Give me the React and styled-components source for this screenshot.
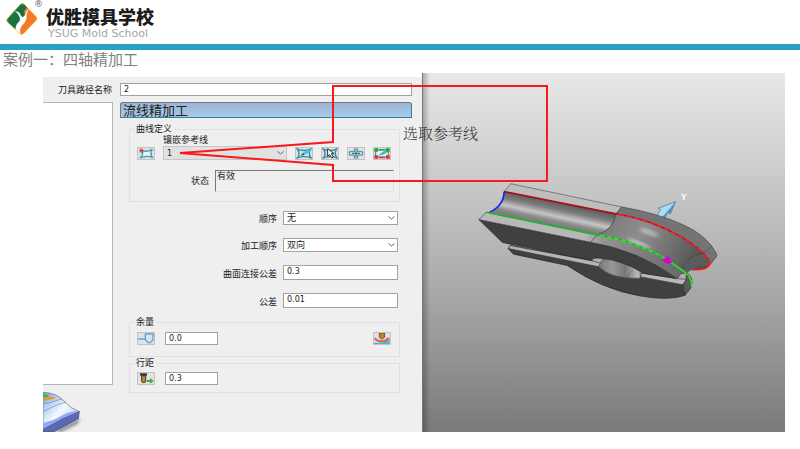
import React from "react";
import styled, { createGlobalStyle } from "styled-components";

const GlobalStyle = createGlobalStyle`
  * {
    box-sizing: border-box;
  }

  body {
    margin: 0;
    background: #fff;
    font-family: "DejaVu Sans", "Noto Sans CJK SC", sans-serif;
  }
`;

const Header = styled.header`
  display: flex;
  height: 50px;
  padding-left: 4px;
  border-bottom: 6px solid #2aa1c0;
`;

const Registered = styled.span`
  width: 8px;
  margin-left: -7px;
  font-size: 9px;
  line-height: 9px;
  color: #666;
`;

const Brand = styled.div`
  padding: 7px 0 0 4px;
`;

const BrandName = styled.div`
  font-family: "Noto Sans CJK SC", sans-serif;
  font-weight: 900;
  font-size: 18px;
  line-height: 18px;
  color: #1c1c1c;
`;

const BrandSub = styled.div`
  padding-left: 2px;
  font-size: 11px;
  line-height: 17px;
  color: #a6a6a6;
`;

const PageTitle = styled.h1`
  margin: 0;
  padding-left: 3px;
  font-family: "Noto Sans CJK SC", sans-serif;
  font-weight: 400;
  font-size: 15px;
  line-height: 18px;
  color: #808080;
`;

const Slide = styled.main`
  position: relative;
  display: grid;
  grid-template-columns: 379px 1fr;
  margin: 5px 15px 16px 43px;
`;

const Panel = styled.form`
  display: flex;
  flex-direction: column;
  margin-top: 4px;
  background: #efefef;
`;

const NameRow = styled.div`
  display: grid;
  grid-template-columns: 69px 1fr;
  align-items: center;
  gap: 8px;
  padding: 6px 10px 6px 0;
`;

const Label = styled.label`
  font-size: 9px;
  line-height: 12px;
  text-align: right;
  color: #222;
`;

const Field = styled.input`
  width: ${({ $narrow }) => ($narrow ? "53px" : "100%")};
  height: ${({ $small }) => ($small ? "13px" : "15px")};
  padding: 0 3px ${({ $small }) => ($small ? 0 : 3)}px;
  border: 1px solid #a2a2a2;
  border-radius: 0;
  background: #fff;
  font-family: inherit;
  font-size: 8px;
  color: #222;
`;

const Body = styled.div`
  display: flex;
  flex: 1;
`;

const Sidebar = styled.div`
  display: flex;
  flex-direction: column;
  justify-content: space-between;
  width: 70px;
`;

const List = styled.div`
  height: 283px;
  border: solid #b4b4bc;
  border-width: 1px 1px 1px 0;
  background: #fff;
`;

const Content = styled.div`
  flex: 1;
  padding: 0 10px 39px 7px;
`;

const SectionTitle = styled.h2`
  margin: 0 0 5px;
  padding-left: 2px;
  border: 1px solid #2f8496;
  border-top-color: #777;
  border-left-color: #777;
  border-radius: 3px 3px 0 0;
  background: linear-gradient(#9ab5d6, #aac8ea);
  font-family: "Noto Sans CJK SC", sans-serif;
  font-weight: 400;
  font-size: 13px;
  line-height: 14px;
  color: #222;
`;

const Group = styled.fieldset`
  min-width: 0;
  margin: 0 12px 0 9px;
  padding: ${({ $top = 0 }) => $top}px 8px ${({ $bottom = 8 }) => $bottom}px 7px;
  border: 1px solid #e0e0e0;
`;

const Legend = styled.legend`
  margin-left: -3px;
  padding: 0 2px;
  font-size: 9px;
  line-height: 12px;
  color: #222;
`;

const Row = styled.div`
  display: flex;
  align-items: flex-end;
  gap: ${({ $wide }) => ($wide ? 10 : 8)}px;
`;

const Spacer = styled.div`
  flex: 1;
`;

const Stack = styled.div`
  display: flex;
  flex: 1;
  flex-direction: column;

  label {
    line-height: 11px;
    text-align: left;
  }
`;

const IconButton = styled.button`
  display: flex;
  align-items: center;
  justify-content: center;
  width: 18px;
  height: 13px;
  padding: 0;
  border: 1px solid #c2c2c2;
  background: #e1e1e1;
`;

const SelectBox = styled.div`
  position: relative;
  display: flex;

  svg {
    position: absolute;
    right: 3px;
    top: 5px;
    pointer-events: none;
  }
`;

const Select = styled.select`
  width: 100%;
  height: 14px;
  padding: 0 3px;
  appearance: none;
  border: 1px solid ${({ $flat }) => ($flat ? "#c6c6c6" : "#a2a2a2")};
  border-radius: 0;
  background: ${({ $flat }) => ($flat ? "#e1e1e1" : "#fff")};
  font-family: inherit;
  font-size: ${({ $flat }) => ($flat ? "8px" : "9px")};
  line-height: 11px;
  color: #222;
`;

const StatusRow = styled.div`
  display: grid;
  grid-template-columns: 72px 1fr;
  align-items: center;
  gap: 6px;
  margin-top: 10px;
  margin-right: -3px;
`;

const Status = styled.textarea`
  width: 100%;
  height: 22px;
  padding: 0 1px;
  border: 1px solid #e3e3e3;
  border-top-color: #777;
  border-left-color: #777;
  background: transparent;
  font-family: inherit;
  font-size: 9px;
  line-height: 11px;
  color: #222;
  resize: none;
  overflow: hidden;
`;

const Options = styled.div`
  display: grid;
  grid-template-columns: 1fr 115px;
  align-items: end;
  gap: 13px 6px;
  padding: 9px 14px 8px 0;
`;

const Viewport = styled.section`
  border-left: 1px solid #777;
  background:
    linear-gradient(90deg, rgba(0, 0, 0, 0.25), rgba(0, 0, 0, 0) 7px),
    linear-gradient(#e8e8e8, #c8c8c8 31%, #a5a5a5 64%, #7a7a7a);

  svg {
    display: block;
    width: 100%;
    height: 100%;
  }
`;

const Callout = styled.div`
  position: absolute;
  left: 135px;
  top: 11px;
  display: flex;
  pointer-events: none;
`;

const CalloutText = styled.span`
  position: absolute;
  left: 225px;
  top: 39px;
  font-family: "Noto Serif CJK SC", "Noto Sans CJK SC", serif;
  font-weight: 300;
  font-size: 15px;
  line-height: 20px;
  white-space: nowrap;
  color: #333;
`;

const Logo = () => (
  <svg width="37" height="37" viewBox="12 1 111 111">
    <path d="M61 14Q67 9 73 14L109 51Q114 57 109 62L71 102Q65 108 59 102L23 68Q17 62 23 56Z" fill="#f47b2a" />
    <path d="M61 14Q67 9 73 14L82 24Q70 28 74 42Q72 60 58 72Q46 82 51 94L23 68Q17 62 23 56Z" fill="#187440" />
    <path d="M44 35Q58 34 62 47Q67 58 76 46Q76 34 88 28Q78 38 80 52Q78 67 68 75Q58 84 61 103L47 91Q45 76 57 66Q63 58 57 48Q52 39 44 35Z" fill="#fff" />
    <path d="M61 14Q67 9 73 14L109 51Q114 57 109 62L71 102Q65 108 59 102L23 68Q17 62 23 56Z" fill="none" stroke="#f3e45a" strokeWidth="2" />
  </svg>
);

const Chevron = () => (
  <svg width="7" height="4" viewBox="0 0 7 4">
    <path d="M.5 .5 3.5 3 6.5 .5" fill="none" stroke="#666" />
  </svg>
);

const Frame = ({ children }) => (
  <svg width="16" height="11" viewBox="0 0 48 33">
    {children}
  </svg>
);

const curve = "M4 3Q24 12 44 3Q35 17 45 30Q24 22 4 30Q14 17 4 3Z";

const CurveIcon = () => (
  <Frame>
    <path d="M12 8Q27 13 43 4Q34 17 44 29Q26 21 6 30Q19 19 12 8" fill="#e8f4f6" stroke="#3a9fb2" strokeWidth="4" />
    <path d="M3 8h14M10 1v14M5 3l10 10M15 3L5 13" stroke="#d84550" strokeWidth="3" />
  </Frame>
);

const DrawIcon = () => (
  <Frame>
    <path d={curve} fill="#c8e6ee" stroke="#318c9f" strokeWidth="4" />
    <path d="M17 21L23 13 38 4 44 10 31 18Z" fill="#51bfe5" />
    <path d="M13 23l8-8 5 6Z" fill="#315963" />
  </Frame>
);

const PickIcon = () => (
  <Frame>
    <path d={curve} fill="#b9dce4" stroke="#318c9f" strokeWidth="4" />
    <path d="M17 2V25L23 20 29 30 34 27 28 17H36Z" fill="#fff" stroke="#333" strokeWidth="3" />
  </Frame>
);

const CrossIcon = () => (
  <Frame>
    <path d="M19 3H29V11H44V21H29V30H19V21H4V11H19Z" fill="#b9edf5" stroke="#3a8797" strokeWidth="3" />
    <path d="M24 7V26M12 16H36" stroke="#555" strokeWidth="3" />
  </Frame>
);

const EditIcon = () => (
  <Frame>
    <path d="M5 6H43V27H5Z" fill="#e2f5f5" stroke="#333" strokeWidth="2" />
    <path d="M12 23L25 12 38 6 43 11 29 20Z" fill="#48b9df" />
    <path d="M1 1h11v10H1ZM36 1h11v10H36ZM15 3h18v4H15Z" fill="#1da735" />
    <path d="M1 22h11v10H1ZM36 22h11v10H36ZM15 26h18v5H15Z" fill="#df2f2b" />
  </Frame>
);

const StockIcon = () => (
  <Frame>
    <path d="M0 18H20M22 3H45V20L37 29H30L22 20Z" fill="none" stroke="#58a4df" strokeWidth="4" />
  </Frame>
);

const ThicknessIcon = () => (
  <Frame>
    <path d="M0 29H18Q40 29 47 14V33H0Z" fill="#39bfd6" />
    <path d="M2 15Q8 25 23 25 38 25 43 14" fill="none" stroke="#e4605e" strokeWidth="7" />
    <path d="M16 0H32V13L24 19 16 13Z" fill="#b58821" stroke="#44391c" strokeWidth="2" />
  </Frame>
);

const StepIcon = () => (
  <Frame>
    <path d="M6 1H27V8H6Z" fill="#333" />
    <path d="M11 8H23V26Q17 32 11 26Z" fill="#bd8b1f" stroke="#333" strokeWidth="3" />
    <path d="M26 21H36V15L47 24 36 32V27H26Z" fill="#35b33d" />
  </Frame>
);

const SurfacePreview = () => (
  <svg width="42" height="47" viewBox="15 48 126 141">
    <defs>
      <linearGradient id="surface" x1="0" y1="0" x2="1" y2="1">
        <stop offset="0" stopColor="#7fa8ed" />
        <stop offset=".5" stopColor="#f1faff" />
        <stop offset="1" stopColor="#8ab2f3" />
      </linearGradient>
      <filter id="soft">
        <feGaussianBlur stdDeviation="5" />
      </filter>
    </defs>
    <path d="M50 187L128 148 118 165 70 189Z" fill="#888" filter="url(#soft)" />
    <path d="M15 70Q56 72 78 96T124 128L15 179Z" fill="url(#surface)" stroke="#666" strokeWidth="2" />
    <path d="M15 76Q27 75 37 81L15 86Z" fill="#2cbf3c" />
    <path d="M15 89Q33 81 47 84L55 88 15 97Z" fill="#ed9335" />
    <path d="M15 105Q48 98 70 90M15 128Q58 105 82 100" fill="none" stroke="#74839a" strokeWidth="2" />
    <path d="M15 181L75 148 124 127L121 149 47 189H15Z" fill="#5b69b2" stroke="#394681" strokeWidth="2" />
    <path d="M15 162Q48 155 75 138 98 126 124 127L75 148 15 180Z" fill="#93a4f4" />
  </svg>
);

const Model = () => (
  <svg viewBox="422 73 363 360">
    <defs>
      <linearGradient id="trough" gradientUnits="userSpaceOnUse" x1="250" y1="96" x2="235" y2="166">
        <stop offset="0" stopColor="#5e5e5e" />
        <stop offset=".3" stopColor="#7e7e7e" />
        <stop offset=".58" stopColor="#c6c6c6" />
        <stop offset=".78" stopColor="#8c8c8c" />
        <stop offset="1" stopColor="#787878" />
      </linearGradient>
      <linearGradient id="bend" gradientUnits="userSpaceOnUse" x1="430" y1="150" x2="710" y2="290">
        <stop offset="0" stopColor="#7e7e7e" />
        <stop offset=".3" stopColor="#8e8e8e" />
        <stop offset=".65" stopColor="#6c6c6c" />
        <stop offset="1" stopColor="#484848" />
      </linearGradient>
      <linearGradient id="rim" gradientUnits="userSpaceOnUse" x1="340" y1="0" x2="650" y2="0">
        <stop offset="0" stopColor="#b8b8b8" />
        <stop offset=".18" stopColor="#949494" />
        <stop offset="1" stopColor="#666" />
      </linearGradient>
      <linearGradient id="hole">
        <stop offset="0" stopColor="#777" />
        <stop offset=".3" stopColor="#999" />
        <stop offset=".6" stopColor="#777" />
        <stop offset=".9" stopColor="#bbb" />
        <stop offset="1" stopColor="#555" />
      </linearGradient>
      <filter id="glow">
        <feGaussianBlur stdDeviation="6" />
      </filter>
    </defs>
    <g transform="translate(470 170) scale(.3333)" strokeLinejoin="round">
      <path d="M557 142L571 120 564 116 616 96 600 133 592 129 582 148Z" fill="#a9dcf5" stroke="#456d89" strokeWidth="2" />
      <path d="M574 145L616 96 600 133 592 129 582 149Z" fill="#5b8db8" />

      {/* lower plate */}
      <path d="M112 237L118 228 365 273 388 291 515 313 638 346 644 378Q600 395 510 380 395 360 290 288L128 254Z" fill="#404040" stroke="#222" strokeWidth="2" />
      <path d="M112 237L118 228 365 274 392 282 384 292Z" fill="#b5b5b5" stroke="#333" strokeWidth="2" />
      <path d="M384 291L396 270Q450 270 517 308L508 327Q420 329 384 291Z" fill="url(#hole)" stroke="#444" strokeWidth="2" />
      <path d="M470 322Q478 308 488 302" fill="none" stroke="#444" strokeWidth="2" strokeDasharray="4 3" />
      <path d="M515 311L620 328 650 330 638 346 510 322Z" fill="#bababa" stroke="#444" strokeWidth="2" />
      <path d="M648 308Q672 325 663 354L644 378Q648 360 638 346L648 330Z" fill="#5c5c5c" stroke="#222" strokeWidth="2" />

      {/* upper body */}
      <path d="M24 150L95 219 360 272Q372 263 388 266 425 267 455 280 490 292 520 312L618 327 626 322Q500 245 360 218Z" fill="#404040" stroke="#222" strokeWidth="2" />
      <path d="M24 150L46 128 380 196Q500 215 592 272L650 310 632 313 620 327Q500 240 360 218Z" fill="url(#rim)" stroke="#444" strokeWidth="2" />
      <path d="M100 66L436 133Q430 178 380 196L56 128Q96 108 100 66Z" fill="url(#trough)" />
      <path d="M436 133Q540 148 640 206 716 254 719 284 712 302 668 301 655 304 650 311L592 272Q500 215 380 196 430 178 436 133Z" fill="url(#bend)" />
      <path d="M638 300Q642 272 676 258 710 248 716 266L719 284Q708 292 684 291 662 296 650 311Z" fill="#5c5c5c" />
      <ellipse cx="536" cy="188" rx="30" ry="7" transform="rotate(20 536 188)" fill="#ddd" opacity=".7" filter="url(#glow)" />
      <ellipse cx="505" cy="221" rx="38" ry="6" transform="rotate(22 505 221)" fill="#eee" opacity=".7" filter="url(#glow)" />
      <path d="M100 66L120 42 454 112 436 133Z" fill="#bdbdbd" stroke="#555" strokeWidth="2" />
      <path d="M436 133L454 112Q560 130 640 166 714 200 740 255L738 263 719 286Q716 254 640 206 540 148 436 133Z" fill="#747474" stroke="#444" strokeWidth="2" />
      <path d="M436 133Q432 178 380 196L360 218" fill="none" stroke="#333" strokeWidth="2" />
      <path d="M638 300Q643 268 680 256 706 252 725 230" fill="none" stroke="#333" strokeWidth="2" strokeDasharray="4 3" />

      {/* drive curves */}
      <path d="M100 66L436 133" stroke="#a90f16" strokeWidth="5" />
      <path d="M436 133Q540 148 640 206 716 254 719 284 712 302 668 301" fill="none" stroke="#ef1b22" strokeWidth="5" />
      <path d="M436 133Q540 148 640 206 700 244 714 268" fill="none" stroke="#8d1218" strokeWidth="3" strokeDasharray="8 16" />
      <path d="M100 66Q99 108 56 128" fill="none" stroke="#2020f0" strokeWidth="5" />
      <path d="M46 128L380 196" stroke="#20b52a" strokeWidth="5" />
      <path d="M380 196Q500 215 592 272L640 305Q668 325 664 353" fill="none" stroke="#23ed25" strokeWidth="5" />
      <path d="M380 196Q500 215 592 272" fill="none" stroke="#168b18" strokeWidth="3" strokeDasharray="8 14" />
      <path d="M576 272L594 260 604 279 590 282Z" fill="#d800d4" stroke="#d800d4" strokeWidth="2" />
      <text x="632" y="90" fontFamily="Liberation Sans, sans-serif" fontSize="25" fontWeight="700" fill="#fff">Y</text>
    </g>
  </svg>
);

const OptionSelect = ({ id, label, value }) => (
  <>
    <Label htmlFor={id}>{label}</Label>
    <SelectBox>
      <Select id={id} defaultValue={value}>
        <option>{value}</option>
      </Select>
      <Chevron />
    </SelectBox>
  </>
);

const OptionField = ({ id, label, value }) => (
  <>
    <Label htmlFor={id}>{label}</Label>
    <Field id={id} defaultValue={value} />
  </>
);

const ToolButton = ({ label, icon: Icon }) => (
  <IconButton type="button" aria-label={label}>
    <Icon />
  </IconButton>
);

const App = () => (
  <>
    <GlobalStyle />
    <Header>
      <Logo />
      <Registered>®</Registered>
      <Brand>
        <BrandName>优胜模具学校</BrandName>
        <BrandSub>YSUG Mold School</BrandSub>
      </Brand>
    </Header>
    <PageTitle>案例一：四轴精加工</PageTitle>

    <Slide>
      <Panel>
        <NameRow>
          <Label htmlFor="name">刀具路径名称</Label>
          <Field id="name" defaultValue="2" $small />
        </NameRow>

        <Body>
          <Sidebar>
            <List />
            <SurfacePreview />
          </Sidebar>

          <Content>
            <SectionTitle>流线精加工</SectionTitle>

            <Group $bottom={9}>
              <Legend>曲线定义</Legend>
              <Row>
                <ToolButton label="曲线" icon={CurveIcon} />
                <Stack>
                  <Label htmlFor="reference">镶嵌参考线</Label>
                  <SelectBox>
                    <Select id="reference" defaultValue="1" $flat>
                      <option>1</option>
                    </Select>
                    <Chevron />
                  </SelectBox>
                </Stack>
                <ToolButton label="绘制" icon={DrawIcon} />
                <ToolButton label="选取" icon={PickIcon} />
                <ToolButton label="添加" icon={CrossIcon} />
                <ToolButton label="编辑" icon={EditIcon} />
              </Row>
              <StatusRow>
                <Label htmlFor="status">状态</Label>
                <Status id="status" readOnly defaultValue="有效" />
              </StatusRow>
            </Group>

            <Options>
              <OptionSelect id="order" label="顺序" value="无" />
              <OptionSelect id="direction" label="加工顺序" value="双向" />
              <OptionField id="join" label="曲面连接公差" value="0.3" />
              <OptionField id="tolerance" label="公差" value="0.01" />
            </Options>

            <Group $top={4} $bottom={11}>
              <Legend>余量</Legend>
              <Row $wide>
                <ToolButton label="余量" icon={StockIcon} />
                <Field aria-label="余量" defaultValue="0.0" $narrow $small />
                <Spacer />
                <ToolButton label="部件余量" icon={ThicknessIcon} />
              </Row>
            </Group>

            <Group $top={3} $bottom={7}>
              <Legend>行距</Legend>
              <Row $wide>
                <ToolButton label="行距" icon={StepIcon} />
                <Field aria-label="行距" defaultValue="0.3" $narrow $small />
              </Row>
            </Group>
          </Content>
        </Body>
      </Panel>

      <Viewport>
        <Model />
      </Viewport>

      <Callout>
        <svg width="372" height="100" viewBox="178 84 372 100">
          <path d="M333 86H547V181H333V165L180 153 333 142Z" fill="none" stroke="#f8191c" strokeWidth="2" />
        </svg>
        <CalloutText>选取参考线</CalloutText>
      </Callout>
    </Slide>
  </>
);

export default App;
